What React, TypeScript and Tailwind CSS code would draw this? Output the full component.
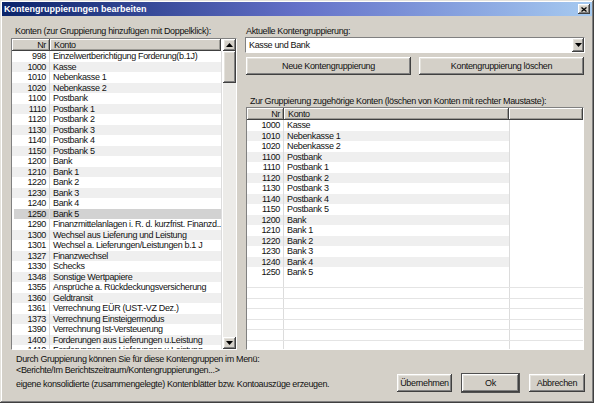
import React from 'react';

const leftRows: [string, string][] = [
  ['998', 'Einzelwertberichtigung Forderung(b.1J)'],
  ['1000', 'Kasse'],
  ['1010', 'Nebenkasse 1'],
  ['1020', 'Nebenkasse 2'],
  ['1100', 'Postbank'],
  ['1110', 'Postbank 1'],
  ['1120', 'Postbank 2'],
  ['1130', 'Postbank 3'],
  ['1140', 'Postbank 4'],
  ['1150', 'Postbank 5'],
  ['1200', 'Bank'],
  ['1210', 'Bank 1'],
  ['1220', 'Bank 2'],
  ['1230', 'Bank 3'],
  ['1240', 'Bank 4'],
  ['1250', 'Bank 5'],
  ['1290', 'Finanzmittelanlagen i. R. d. kurzfrist. Finanzd...'],
  ['1300', 'Wechsel aus Lieferung und Leistung'],
  ['1301', 'Wechsel a. Lieferungen/Leistungen b.1 J'],
  ['1327', 'Finanzwechsel'],
  ['1330', 'Schecks'],
  ['1348', 'Sonstige Wertpapiere'],
  ['1355', 'Ansprüche a. Rückdeckungsversicherung'],
  ['1360', 'Geldtransit'],
  ['1361', 'Verrechnung EÜR (UST.-VZ Dez.)'],
  ['1373', 'Verrechnung Einsteigermodus'],
  ['1390', 'Verrechnung Ist-Versteuerung'],
  ['1400', 'Forderungen aus Lieferungen u.Leistung'],
  ['1410', 'Forderungen aus Lieferungen u.Leistung'],
];

const rightRows: [string, string][] = [
  ['1000', 'Kasse'],
  ['1010', 'Nebenkasse 1'],
  ['1020', 'Nebenkasse 2'],
  ['1100', 'Postbank'],
  ['1110', 'Postbank 1'],
  ['1120', 'Postbank 2'],
  ['1130', 'Postbank 3'],
  ['1140', 'Postbank 4'],
  ['1150', 'Postbank 5'],
  ['1200', 'Bank'],
  ['1210', 'Bank 1'],
  ['1220', 'Bank 2'],
  ['1230', 'Bank 3'],
  ['1240', 'Bank 4'],
  ['1250', 'Bank 5'],
];

const raised =
  'shadow-[inset_-1px_-1px_#404040,inset_1px_1px_#ffffff,inset_-2px_-2px_#808080,inset_2px_2px_#e4e2dc]';
const sunken = 'border border-t-[#808080] border-l-[#808080] border-b-white border-r-white';

function Button({ label, w, def }: { label: string; w: string; def?: boolean }) {
  return (
    <div
      className={`${w} h-[18px] flex items-center justify-center bg-[#d4d0c8] ${raised} ${def ? 'outline outline-1 outline-[#505050]' : ''}`}
    >
      {label}
    </div>
  );
}

function HeaderCell({ label, className }: { label: string; className: string }) {
  return (
    <div
      className={`h-full flex items-center ${className} shadow-[inset_-1px_-1px_#404040,inset_1px_1px_#ffffff,inset_-2px_-2px_#9c9a94]`}
    >
      {label}
    </div>
  );
}

function Arrow({ up }: { up?: boolean }) {
  return (
    <div className={`w-[13px] h-[12px] shrink-0 bg-[#d4d0c8] flex items-center justify-center ${raised}`}>
      <svg width="7" height="4" viewBox="0 0 7 4">
        <path d={up ? 'M3.5 0 L7 4 L0 4 Z' : 'M0 0 L7 0 L3.5 4 Z'} fill="#000" />
      </svg>
    </div>
  );
}

export default function App() {
  return (
    <div
      className="w-[594px] h-[403px] bg-[#d4d0c8] flex flex-col text-[9px] tracking-[-0.35px] leading-[10.5px] text-[#111] shadow-[inset_-1px_-1px_#404040,inset_1px_1px_#e4e2dc,inset_-2px_-2px_#808080,inset_2px_2px_#ffffff] p-[2px]"
      style={{ fontFamily: '"Liberation Sans", Arial, sans-serif' }}
    >
      {/* Title bar */}
      <div className="h-[14px] shrink-0 flex items-center justify-between bg-gradient-to-r from-[#0a246a] via-[#6470c8] to-[#a6caf0] pl-[2px] pr-[2px]">
        <span className="text-white font-bold text-[9px] tracking-[0px]">Kontengruppierungen bearbeiten</span>
        <div className={`w-[12px] h-[10px] bg-[#d4d0c8] flex items-center justify-center ${raised}`}>
          <svg width="6" height="5" viewBox="0 0 6 5">
            <path d="M0.5 0.5 L5.5 4.5 M5.5 0.5 L0.5 4.5" stroke="#000" strokeWidth="1.3" />
          </svg>
        </div>
      </div>

      {/* Body */}
      <div className="flex flex-1 pl-[9px] pt-[9px] gap-[8px]">
        {/* Left */}
        <div className="w-[226px] flex flex-col">
          <div className="h-[13px] pl-[4px] flex items-center">Konten (zur Gruppierung hinzufügen mit Doppelklick):</div>
          <div className={`h-[312px] flex ${sunken} bg-white`}>
            <div className="flex-1 flex flex-col overflow-hidden">
              <div className="h-[12px] shrink-0 flex bg-[#d4d0c8]">
                <HeaderCell label="Nr" className="w-[38px] justify-end pr-[4px]" />
                <HeaderCell label="Konto" className="flex-1 pl-[4px]" />
                <div className="w-[2px] bg-white" />
              </div>
              {leftRows.map(([nr, name], i) => {
                const sel = nr === '1250';
                const bg = sel ? 'bg-[#d2d2d2]' : i % 2 ? 'bg-[#efefef]' : 'bg-white';
                return (
                  <div key={nr} className="h-[10.5px] shrink-0 flex">
                    <div
                      className={`text-right pr-[3px] border-r border-[#dcdcdc] ${sel ? 'bg-[#d2d2d2] ml-[2px] w-[36px]' : `w-[38px] ${bg}`}`}
                    >
                      {nr}
                    </div>
                    <div className={`flex-1 pl-[3px] whitespace-nowrap overflow-hidden ${bg}`}>{name}</div>
                    <div className="w-[2px] bg-white border-l border-[#dcdcdc]" />
                  </div>
                );
              })}
            </div>
            {/* Scrollbar */}
            <div className="w-[13px] flex flex-col bg-[#ecebe8]">
              <Arrow up />
              <div className={`h-[32px] bg-[#d4d0c8] ${raised}`} />
              <div className="flex-1" />
              <Arrow />
            </div>
          </div>
        </div>

        {/* Right */}
        <div className="w-[340px] flex flex-col">
          <div className="h-[12px] pl-[1px] flex items-center">Aktuelle Kontengruppierung:</div>
          <div className={`h-[16px] flex items-center bg-white ${sunken}`}>
            <span className="flex-1 pl-[3px]">Kasse und Bank</span>
            <div className={`w-[12px] h-[14px] bg-[#d4d0c8] flex items-center justify-center ${raised}`}>
              <svg width="7" height="4" viewBox="0 0 7 4">
                <path d="M0 0 L7 0 L3.5 4 Z" fill="#000" />
              </svg>
            </div>
          </div>
          <div className="flex justify-between mt-[4px] pl-[1px] pr-[1px]">
            <Button label="Neue Kontengruppierung" w="w-[165px]" />
            <Button label="Kontengruppierung löschen" w="w-[165px]" />
          </div>
          <div className="h-[12px] mt-[20px] pl-[5px] flex items-center">
            Zur Gruppierung zugehörige Konten (löschen von Konten mit rechter Maustaste):
          </div>
          <div className={`h-[243px] ml-[1px] mr-[1px] flex flex-col overflow-hidden bg-white ${sunken}`}>
            <div className="h-[12px] shrink-0 flex bg-[#d4d0c8]">
              <HeaderCell label="Nr" className="w-[37px] justify-end pr-[4px]" />
              <HeaderCell label="Konto" className="w-[225px] pl-[4px]" />
              <HeaderCell label="" className="flex-1" />
            </div>
            {rightRows.map(([nr, name], i) => {
              const bg = i % 2 ? 'bg-[#efefef]' : 'bg-white';
              return (
                <div key={nr} className="h-[10.5px] shrink-0 flex">
                  <div className={`w-[37px] text-right pr-[3px] border-r border-[#dcdcdc] ${bg}`}>{nr}</div>
                  <div className={`w-[225px] pl-[3px] ${bg}`}>{name}</div>
                  <div className="flex-1 bg-white border-l border-[#dcdcdc]" />
                </div>
              );
            })}
            {Array.from({ length: 8 }).map((_, i) => (
              <div key={i} className="h-[10.5px] shrink-0 flex border-b border-[#e4e4e4]">
                <div className="w-[37px] border-r border-[#dcdcdc]" />
                <div className="w-[225px]" />
                <div className="flex-1 border-l border-[#dcdcdc]" />
              </div>
            ))}
          </div>
        </div>
      </div>

      {/* Footer */}
      <div className="h-[50px] shrink-0 flex items-end justify-between pl-[14px] pr-[7px] pb-[9px]">
        <div className="flex flex-col pb-[2px]">
          <span className="leading-[11px]">Durch Gruppierung können Sie für diese Kontengruppen im Menü:</span>
          <span className="leading-[11px]">&lt;Berichte/Im Berichtszeitraum/Kontengruppierungen...&gt;</span>
          <span className="leading-[11px] mt-[3px]">eigene konsolidierte (zusammengelegte) Kontenblätter bzw. Kontoauszüge erzeugen.</span>
        </div>
        <div className="flex gap-[10px]">
          <Button label="Übernehmen" w="w-[55px]" />
          <Button label="Ok" w="w-[57px]" def />
          <Button label="Abbrechen" w="w-[56px]" />
        </div>
      </div>
    </div>
  );
}
